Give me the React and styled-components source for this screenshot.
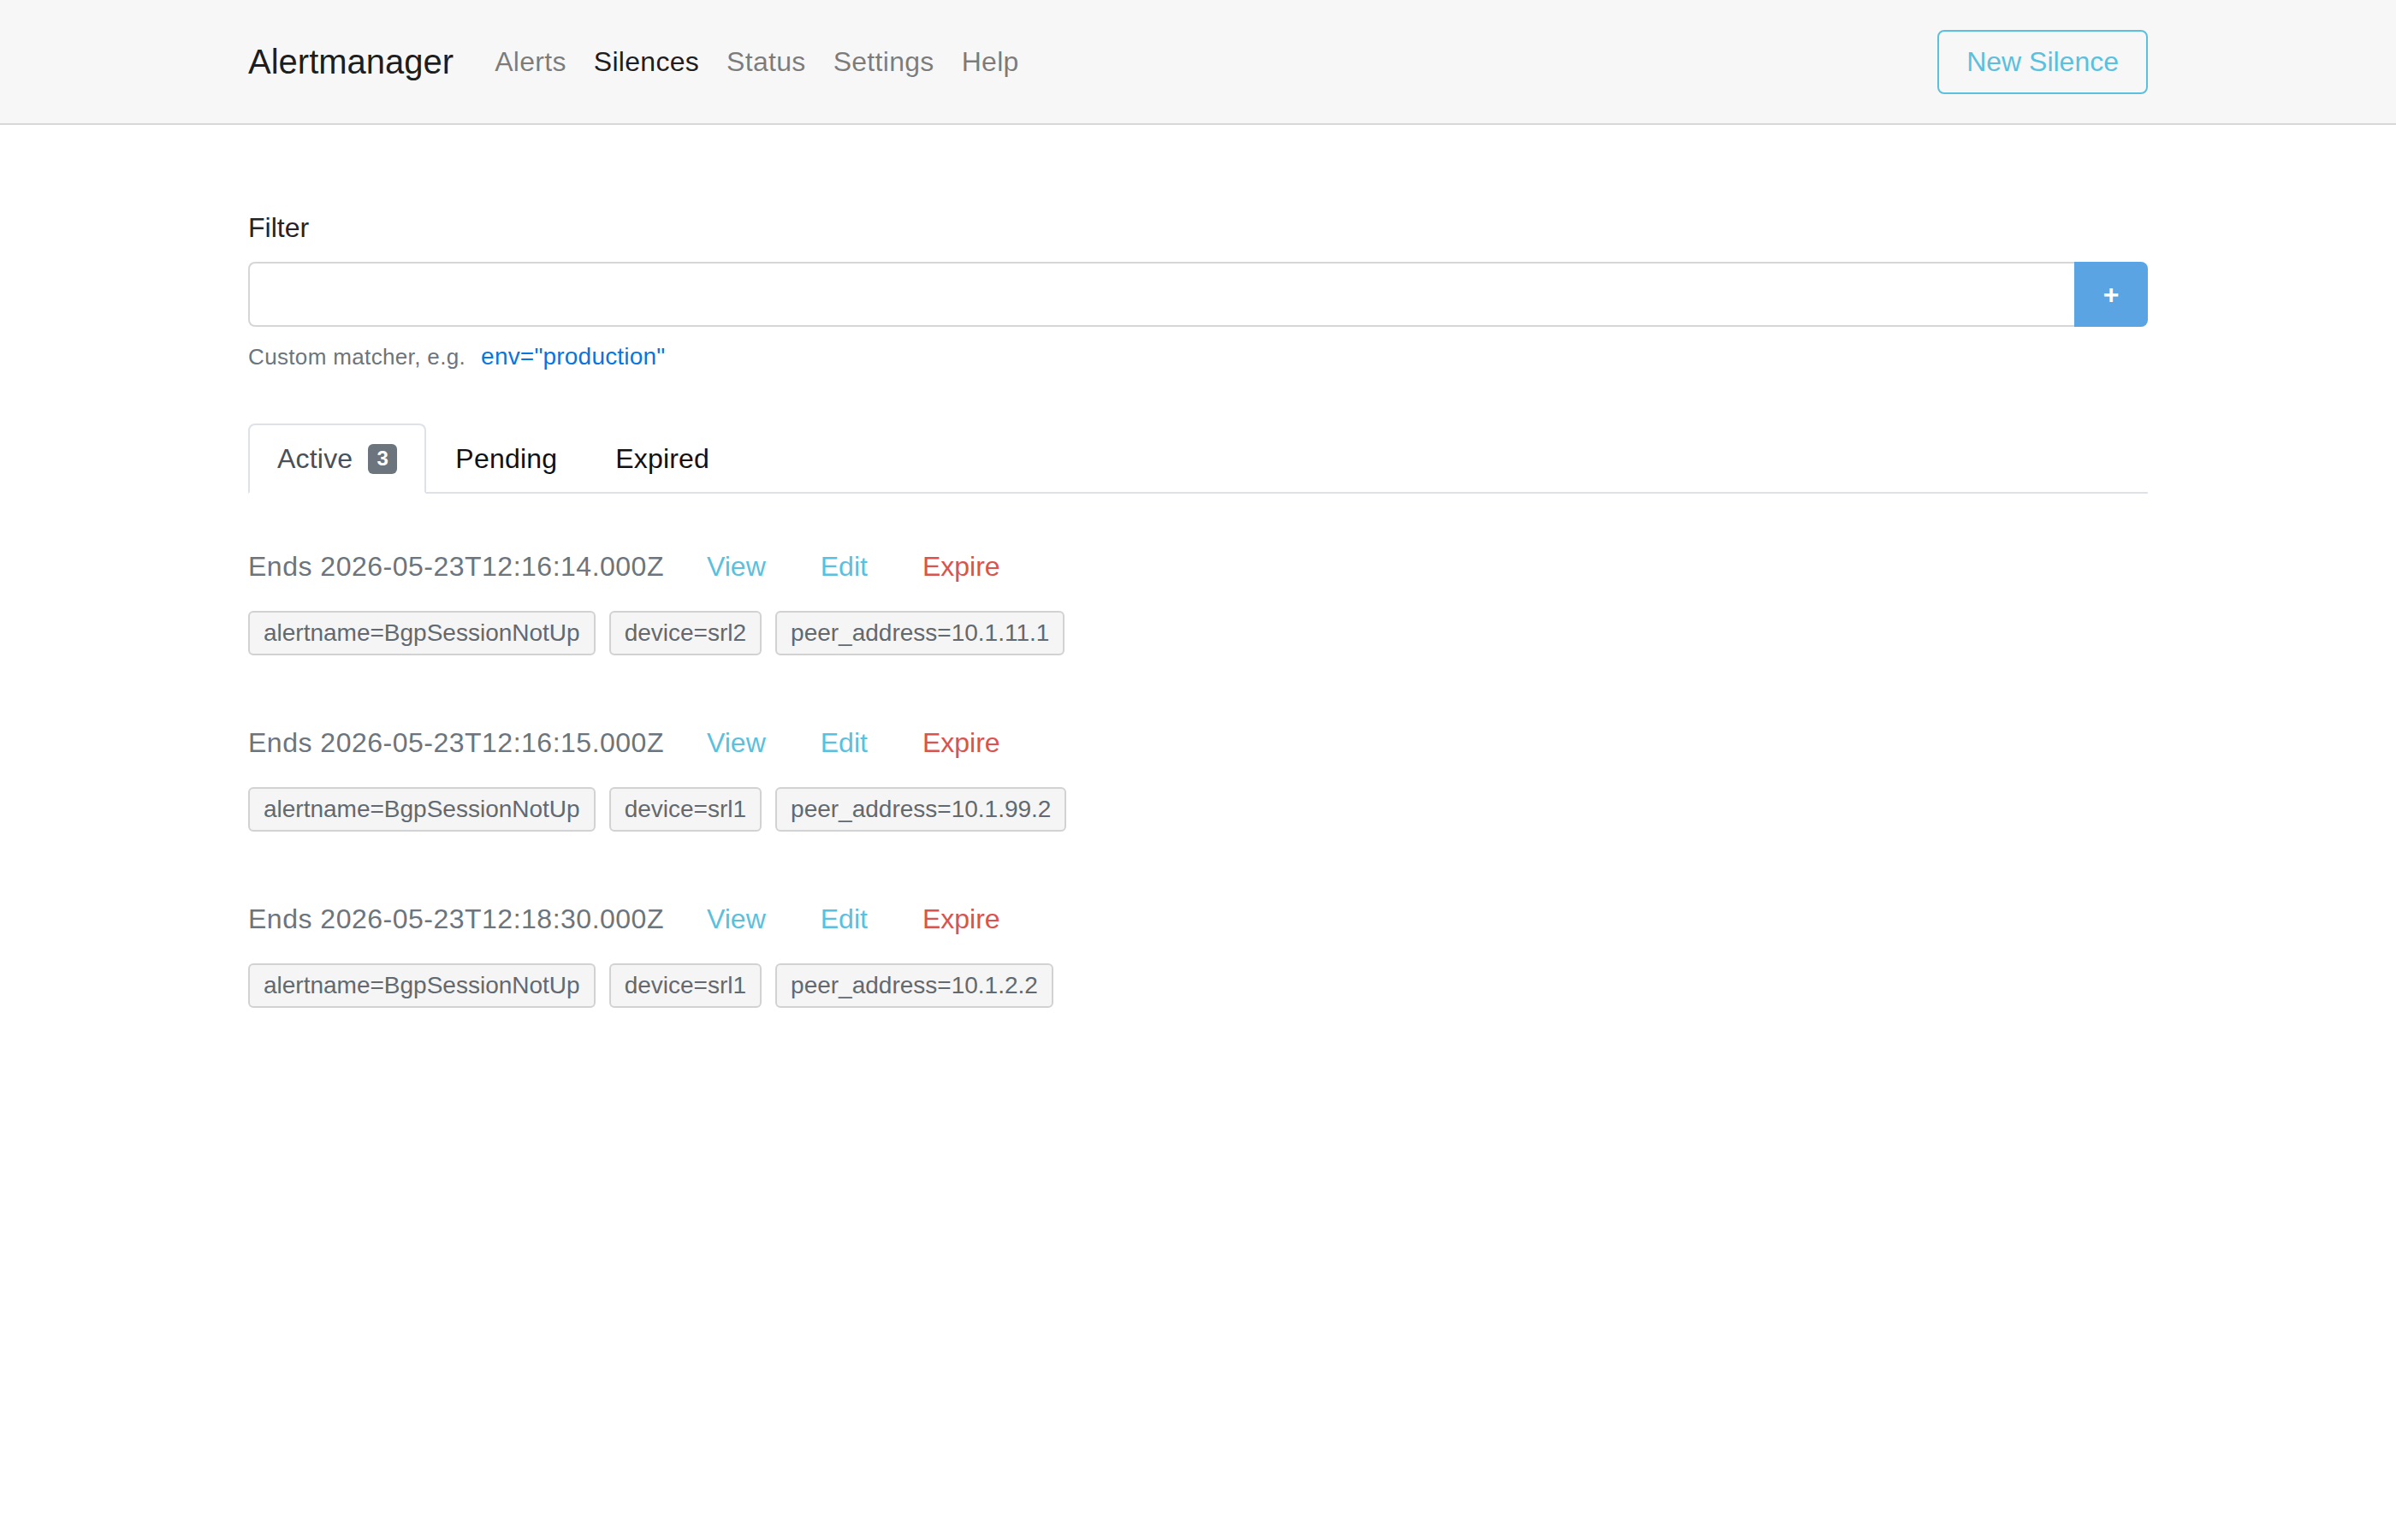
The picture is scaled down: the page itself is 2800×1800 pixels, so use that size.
import React from "react";
import styled, { createGlobalStyle } from "styled-components";

const GlobalStyle = createGlobalStyle`
  html, body {
    margin: 0;
    padding: 0;
    background: #ffffff;
    font-family: "Liberation Sans", Arial, sans-serif;
    color: #212529;
  }
  * { box-sizing: border-box; }
`;

const Header = styled.header`
  height: 146px;
  background: #f7f7f7;
  border-bottom: 2px solid #d8d8d8;
`;

const Container = styled.div`
  width: 2220px;
  margin: 0 auto;
`;

const NavInner = styled(Container)`
  height: 100%;
  display: flex;
  align-items: center;
`;

const Brand = styled.a`
  font-size: 40px;
  line-height: 60px;
  color: rgba(0, 0, 0, 0.9);
  margin-right: 32px;
  text-decoration: none;
`;

const NavLink = styled.a`
  font-size: 32px;
  line-height: 48px;
  padding: 0 16px;
  letter-spacing: 0.3px;
  color: ${(p) => (p.$active ? "rgba(0,0,0,0.9)" : "rgba(0,0,0,0.5)")};
  text-decoration: none;
`;

const OutlineButton = styled.button`
  margin-left: auto;
  height: 75px;
  padding: 0 32px;
  border: 2px solid #5bc0de;
  border-radius: 8px;
  background: transparent;
  color: #5bc0de;
  font-family: inherit;
  font-size: 32px;
  line-height: 48px;
`;

const Main = styled(Container)`
  padding-top: 96px;
`;

const FilterLabel = styled.label`
  display: block;
  font-size: 32px;
  line-height: 48px;
  margin-bottom: 16px;
  color: #212529;
`;

const InputGroup = styled.div`
  display: flex;
  height: 76px;
`;

const FilterInput = styled.input`
  flex: 1;
  height: 100%;
  border: 2px solid #d6d6d6;
  border-right: none;
  border-radius: 8px 0 0 8px;
  font-family: inherit;
  font-size: 32px;
  padding: 0 24px;
  outline: none;
`;

const AddButton = styled.button`
  width: 86px;
  height: 100%;
  border: none;
  border-radius: 0 8px 8px 0;
  background: #5aa4e3;
  color: #ffffff;
  font-family: inherit;
  font-size: 32px;
  font-weight: bold;
`;

const HelpRow = styled.div`
  margin-top: 8px;
  height: 54px;
  display: flex;
  align-items: center;
  font-size: 26px;
  letter-spacing: 0.35px;
  color: #6c757d;
`;

const ExampleLink = styled.a`
  font-size: 28px;
  letter-spacing: 0.2px;
  color: #0a74e0;
  padding: 0 18px;
  text-decoration: none;
`;

const TabBar = styled.div`
  margin-top: 51px;
  display: flex;
  border-bottom: 2px solid #dee2e6;
`;

const Tab = styled.a`
  display: flex;
  align-items: center;
  padding: 15px 32px;
  margin-bottom: -2px;
  font-size: 32px;
  line-height: 48px;
  letter-spacing: 0.2px;
  border: 2px solid ${(p) => (p.$active ? "#dee2e6" : "transparent")};
  border-bottom-color: ${(p) => (p.$active ? "#ffffff" : "transparent")};
  border-radius: 8px 8px 0 0;
  background: ${(p) => (p.$active ? "#ffffff" : "transparent")};
  color: ${(p) => (p.$active ? "#495057" : "#111111")};
  text-decoration: none;
`;

const Badge = styled.span`
  margin-left: 18px;
  height: 35px;
  min-width: 34px;
  padding: 0 9px;
  display: inline-flex;
  align-items: center;
  justify-content: center;
  border-radius: 6px;
  background: #6c757d;
  color: #ffffff;
  font-size: 24px;
  font-weight: bold;
`;

const SilenceList = styled.ul`
  list-style: none;
  margin: 47px 0 0;
  padding: 0;
`;

const SilenceItem = styled.li`
  margin-bottom: 64px;
`;

const HeadingRow = styled.div`
  height: 76px;
  display: flex;
  align-items: center;
  margin-bottom: 14px;
`;

const EndsText = styled.span`
  font-size: 32px;
  letter-spacing: 0.5px;
  color: #6c757d;
  margin-right: 18px;
`;

const ActionLink = styled.a`
  padding: 0 32px;
  font-size: 32px;
  line-height: 48px;
  color: ${(p) => (p.$danger ? "#d9534f" : "#5bc0de")};
  text-decoration: none;
`;

const LabelRow = styled.div`
  display: flex;
  gap: 16px;
`;

const Matcher = styled.span`
  height: 52px;
  padding: 0 16px;
  display: inline-flex;
  align-items: center;
  border: 2px solid #d2d2d2;
  border-radius: 6px;
  background: #f5f5f5;
  color: #626970;
  font-size: 28px;
`;

const silences = [
  {
    ends: "2026-05-23T12:16:14.000Z",
    matchers: ["alertname=BgpSessionNotUp", "device=srl2", "peer_address=10.1.11.1"],
  },
  {
    ends: "2026-05-23T12:16:15.000Z",
    matchers: ["alertname=BgpSessionNotUp", "device=srl1", "peer_address=10.1.99.2"],
  },
  {
    ends: "2026-05-23T12:18:30.000Z",
    matchers: ["alertname=BgpSessionNotUp", "device=srl1", "peer_address=10.1.2.2"],
  },
];

export default function App() {
  return (
    <>
      <GlobalStyle />
      <Header>
        <NavInner>
          <Brand>Alertmanager</Brand>
          <NavLink>Alerts</NavLink>
          <NavLink $active>Silences</NavLink>
          <NavLink>Status</NavLink>
          <NavLink>Settings</NavLink>
          <NavLink>Help</NavLink>
          <OutlineButton>New Silence</OutlineButton>
        </NavInner>
      </Header>
      <Main>
        <FilterLabel>Filter</FilterLabel>
        <InputGroup>
          <FilterInput />
          <AddButton>+</AddButton>
        </InputGroup>
        <HelpRow>
          Custom matcher, e.g.
          <ExampleLink>env="production"</ExampleLink>
        </HelpRow>
        <TabBar>
          <Tab $active>
            Active<Badge>3</Badge>
          </Tab>
          <Tab>Pending</Tab>
          <Tab>Expired</Tab>
        </TabBar>
        <SilenceList>
          {silences.map((s) => (
            <SilenceItem key={s.ends}>
              <HeadingRow>
                <EndsText>Ends {s.ends}</EndsText>
                <ActionLink>View</ActionLink>
                <ActionLink>Edit</ActionLink>
                <ActionLink $danger>Expire</ActionLink>
              </HeadingRow>
              <LabelRow>
                {s.matchers.map((m) => (
                  <Matcher key={m}>{m}</Matcher>
                ))}
              </LabelRow>
            </SilenceItem>
          ))}
        </SilenceList>
      </Main>
    </>
  );
}
